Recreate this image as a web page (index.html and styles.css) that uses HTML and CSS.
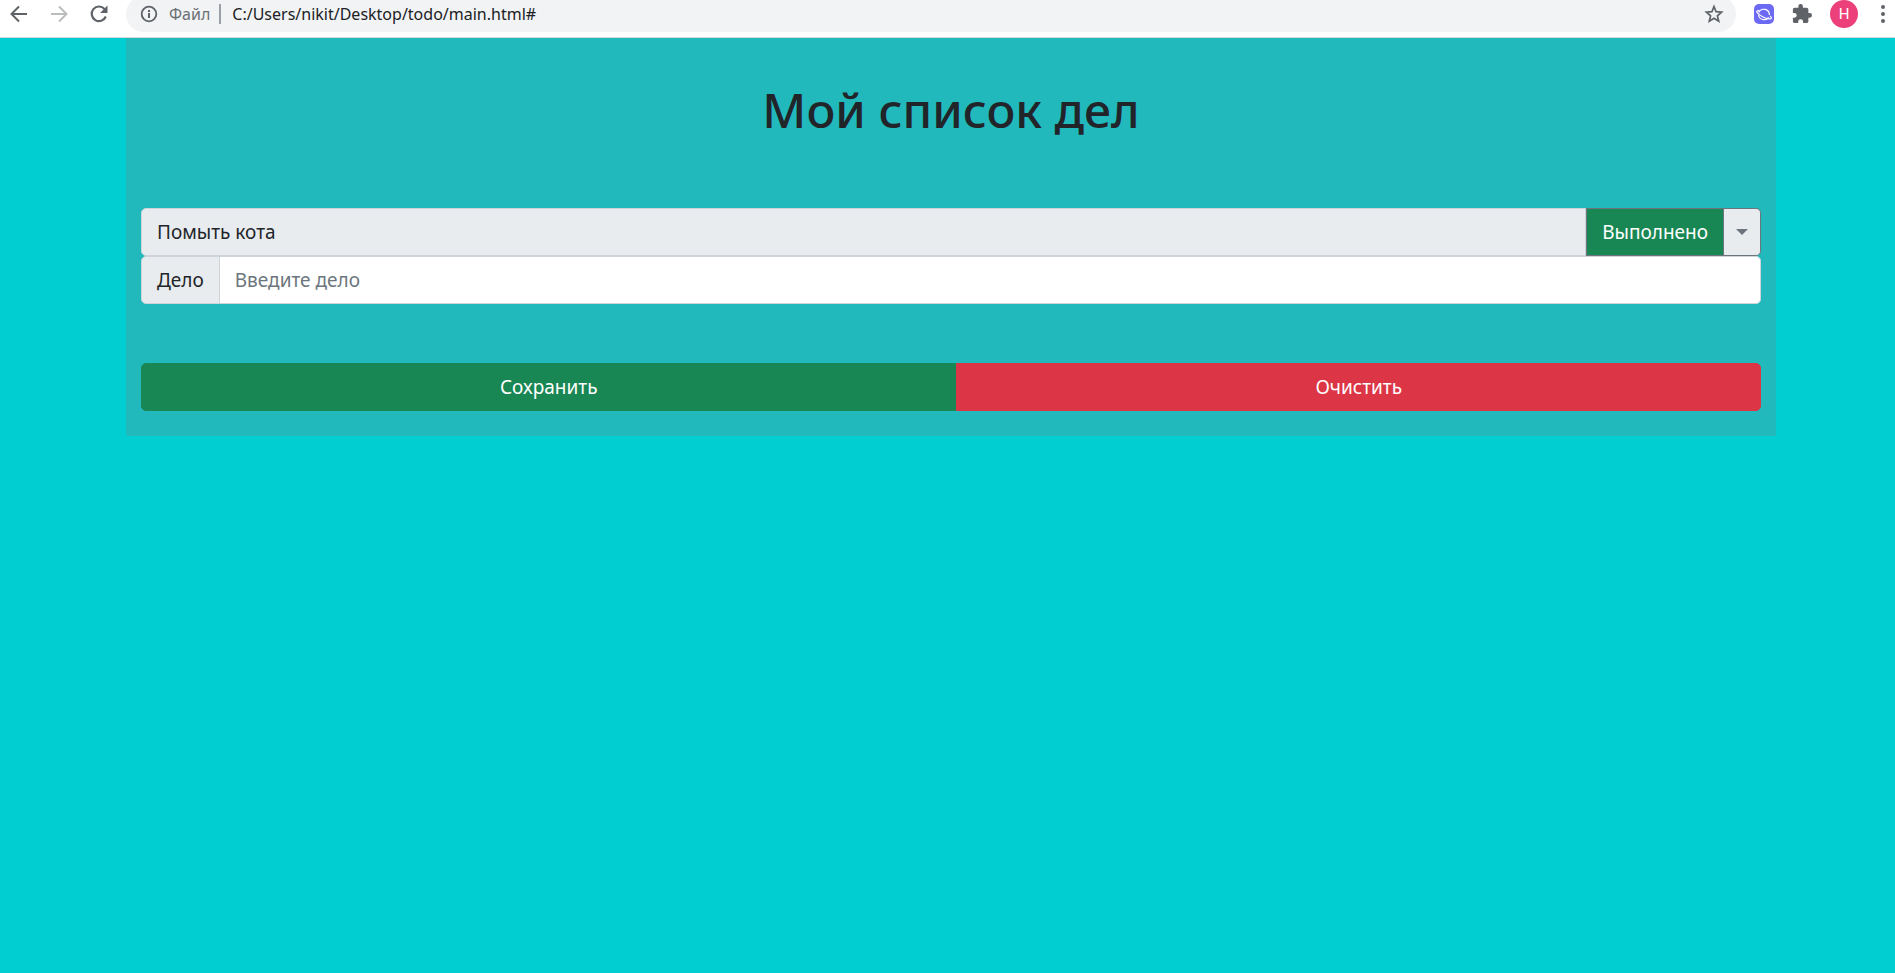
FILE: index.html
```html
<!DOCTYPE html>
<html lang="ru">
<head>
<meta charset="utf-8">
<title>Мой список дел</title>
<link rel="stylesheet" href="styles.css">
</head>
<body>
<header class="toolbar">
  <nav class="nav">
    <button class="icon-btn" type="button" aria-label="Назад">
      <svg width="22" height="22" viewBox="0 0 22 22" fill="none" stroke="#5f6368" stroke-width="2"><path d="M19 11H4M11 3.5 3.5 11l7.5 7.5"/></svg>
    </button>
    <button class="icon-btn" type="button" aria-label="Вперёд">
      <svg width="22" height="22" viewBox="0 0 22 22" fill="none" stroke="#babcbe" stroke-width="2"><path d="M3 11h15M11 3.5l7.500 7.500-7.500 7.500"/></svg>
    </button>
    <button class="icon-btn" type="button" aria-label="Обновить">
      <svg width="22" height="22" viewBox="0 0 22 22"><path d="M17.800 13.500A7.300 7.300 0 1 1 16.500 6" fill="none" stroke="#5f6368" stroke-width="2.200"/><path d="M19.500 2.500v7.500h-7.500z" fill="#5f6368"/></svg>
    </button>
  </nav>
  <div class="omnibox">
    <svg width="18" height="18" viewBox="0 0 18 18"><circle cx="9" cy="9" r="7.300" fill="none" stroke="#5f6368" stroke-width="1.800"/><path d="M8 8h2v5H8zM8 5h2v2H8z" fill="#5f6368"/></svg>
    <label class="scheme" for="url">Файл</label>
    <input class="url" id="url" type="text" value="C:/Users/nikit/Desktop/todo/main.html#">
    <button class="icon-btn" type="button" aria-label="Добавить в закладки">
      <svg width="20" height="20" viewBox="0 0 20 20" fill="none" stroke="#5f6368" stroke-width="1.700"><path d="m10 2.600 2.100 5.100 5.500.5-4.200 3.600 1.300 5.400-4.700-2.900-4.700 2.900 1.300-5.400-4.200-3.600 5.500-.5z"/></svg>
    </button>
  </div>
  <div class="actions">
    <button class="icon-btn" type="button" aria-label="Расширение">
      <svg width="20" height="20" viewBox="0 0 20 20"><rect width="20" height="20" rx="5" fill="#6c6af4"/><g fill="none" stroke="#fff" stroke-width="1.200"><path d="M4.700 8.600A5.600 5.600 0 0 1 15.400 11M14.600 13.300A5.600 5.600 0 0 1 4.500 11"/><path d="M5.300 6.600C2.900 6.300 2 7.300 3.400 8.900c2.500 2.800 8.500 6 12.300 6 2 0 2.200-1.300.5-3"/></g></svg>
    </button>
    <button class="icon-btn" type="button" aria-label="Расширения">
      <svg width="20" height="20" viewBox="1 1 22 22"><path fill="#5f6368" d="M20.500 11H19V7c0-1.100-.9-2-2-2h-4V3.500a2.500 2.500 0 0 0-5 0V5H4c-1.100 0-2 .9-2 2v3.800h1.500a2.700 2.700 0 0 1 0 5.400H2V20c0 1.100.9 2 2 2h3.800v-1.500a2.700 2.700 0 0 1 5.400 0V22H17c1.100 0 2-.9 2-2v-4h1.500a2.500 2.500 0 0 0 0-5z"/></svg>
    </button>
    <button class="avatar" type="button">Н</button>
    <button class="icon-btn" type="button" aria-label="Меню">
      <svg width="14" height="20" viewBox="0 0 14 20" fill="#5f6368"><circle cx="7" cy="3" r="2"/><circle cx="7" cy="10" r="2"/><circle cx="7" cy="17" r="2"/></svg>
    </button>
  </div>
</header>
<main class="page">
  <div class="container">
    <h1 class="title">Мой список дел</h1>
    <div class="group">
      <span class="group-text task">Помыть кота</span>
      <button class="btn btn-done" type="button">Выполнено</button>
      <button class="btn btn-toggle" type="button" aria-label="Действия"><span class="caret"></span></button>
    </div>
    <form class="form">
      <div class="group">
        <label class="group-text name" for="task">Дело</label>
        <input class="field" id="task" type="text" placeholder="Введите дело">
      </div>
      <div class="buttons">
        <button class="btn btn-save" type="button">Сохранить</button>
        <button class="btn btn-clear" type="button">Очистить</button>
      </div>
    </form>
  </div>
</main>
</body>
</html>
```
FILE: styles.css
```css
* {
  box-sizing: border-box;
}

body {
  margin: 0;
  min-height: 100vh;
  background: #00ced1;
  color: #212529;
  font: 19px/30px "Noto Sans", "Open Sans", sans-serif;
}

button,
input {
  margin: 0;
  font: inherit;
}

.toolbar {
  display: flex;
  align-items: center;
  height: 38px;
  padding-bottom: 9px;
  overflow: hidden;
  background: #fff;
  border-bottom: 1px solid #d5d8dc;
}

.nav {
  display: flex;
  gap: 18px;
  padding: 0 16px 0 8px;
}

.icon-btn {
  display: flex;
  padding: 0;
  background: none;
  border: 0;
}

.omnibox {
  display: flex;
  flex: 1;
  align-items: center;
  height: 36px;
  padding: 0 12px 0 14px;
  background: #f1f3f4;
  border-radius: 18px;
  font-size: 16px;
}

.scheme {
  margin-left: 11px;
  padding-right: 9px;
  border-right: 2px solid #9aa0a6;
  color: #6b6f74;
  line-height: 20px;
}

.url {
  flex: 1;
  min-width: 0;
  padding: 0 0 0 11px;
  background: none;
  border: 0;
  color: #202124;
}

.actions {
  display: flex;
  align-items: center;
  gap: 18px;
  padding: 0 5px 0 18px;
}

.avatar {
  width: 28px;
  height: 28px;
  padding: 0;
  background: #ec407a;
  border: 0;
  border-radius: 50%;
  color: #fff;
  font: 15px/28px Roboto, sans-serif;
}

.page {
  padding-left: 7px;
}

.container {
  max-width: 1650px;
  margin: 0 auto;
  padding: 42px 15px 25px;
  background: #22b9bd;
}

.title {
  margin: 0 0 68px;
  font-size: 48px;
  font-weight: 500;
  line-height: 60px;
  text-align: center;
}

.group,
.buttons {
  display: flex;
}

.group-text,
.field {
  padding: 8px 15px;
  border: 1px solid #ced4da;
}

.group-text {
  background: #e9ecef;
  border-radius: 5px 0 0 5px;
}

.task {
  flex: 1;
}

.field {
  flex: 1;
  min-width: 0;
  background: #fff;
  border-left: 0;
  border-radius: 0 5px 5px 0;
}

.field::placeholder {
  color: #6c757d;
  opacity: 1;
}

.btn {
  padding: 8px 15px;
  border: 1px solid;
  color: #fff;
}

.btn-done {
  background: #198754;
  border-color: #6c757d;
}

.btn-toggle {
  padding: 8px 12px;
  background: #e9ecef;
  border-color: #6c757d;
  border-left: 0;
  border-radius: 0 5px 5px 0;
}

.caret {
  display: block;
  border: 6px solid transparent;
  border-top-color: #6c757d;
  border-bottom: 0;
}

.buttons {
  padding-top: 59px;
}

.btn-save,
.btn-clear {
  flex: auto;
}

.btn-save {
  background: #198754;
  border-color: #198754;
  border-radius: 5px 0 0 5px;
}

.btn-clear {
  background: #dc3545;
  border-color: #dc3545;
  border-radius: 0 5px 5px 0;
}
```
